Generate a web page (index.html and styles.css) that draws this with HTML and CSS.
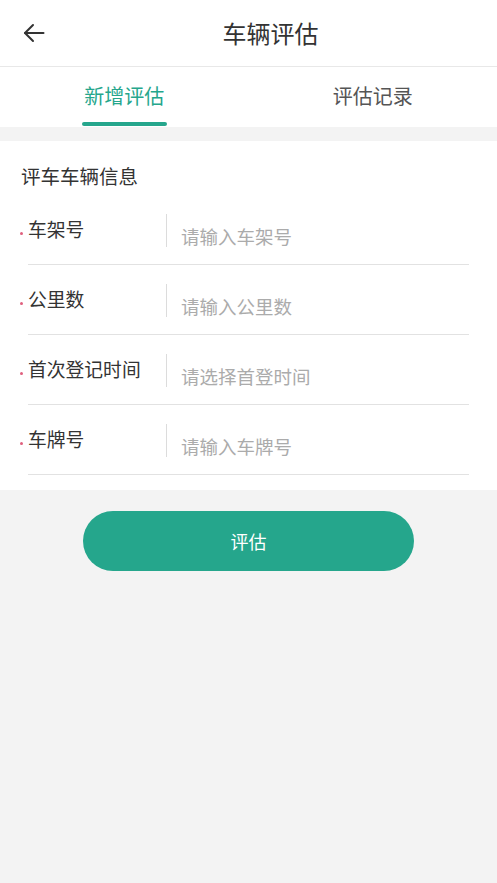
FILE: index.html
```html
<!DOCTYPE html>
<html lang="zh-CN">
<head>
<meta charset="utf-8">
<meta name="viewport" content="width=device-width, initial-scale=1">
<title>车辆评估</title>
<link rel="stylesheet" href="styles.css">
</head>
<body>
<header class="topbar">
  <button class="back" aria-label="返回">
    <svg width="22" height="22" viewBox="0 0 22 22" fill="none" stroke="#333" stroke-width="2" stroke-linecap="round" stroke-linejoin="round"><path d="M20.5 11H2"/><path d="M10 3 L2 11 L10 19"/></svg>
  </button>
  <h1 class="title">车辆评估</h1>
</header>
<nav class="tabs">
  <div class="tab active"><span class="tab-text">新增评估</span><span class="tab-line"></span></div>
  <div class="tab"><span class="tab-text">评估记录</span><span class="tab-line"></span></div>
</nav>
<section class="card">
  <div class="card-title">评车车辆信息</div>
  <div class="row"><div class="label">车架号</div><div class="sep"></div><div class="placeholder">请输入车架号</div></div>
  <div class="row"><div class="label">公里数</div><div class="sep"></div><div class="placeholder">请输入公里数</div></div>
  <div class="row"><div class="label">首次登记时间</div><div class="sep"></div><div class="placeholder">请选择首登时间</div></div>
  <div class="row"><div class="label">车牌号</div><div class="sep"></div><div class="placeholder">请输入车牌号</div></div>
</section>
<div class="actions">
  <button class="submit">评估</button>
</div>
</body>
</html>
```
FILE: styles.css
```css
* { box-sizing: border-box; }
html, body { margin: 0; padding: 0; }
body {
  background: #f3f3f3;
  font-family: "Noto Sans CJK SC", "Noto Sans", sans-serif;
  color: #333;
  min-height: 883px;
}
.topbar {
  height: 67px;
  background: #fff;
  border-bottom: 1px solid #e8e8e8;
  display: flex;
  align-items: center;
  justify-content: center;
  padding-left: 44px;
  position: relative;
}
.back {
  position: absolute;
  left: 23px;
  top: 22px;
  width: 22px;
  height: 22px;
  padding: 0;
  border: 0;
  background: none;
  display: flex;
}
.title {
  margin: 0;
  font-size: 24px;
  font-weight: 400;
  line-height: 30px;
  color: #333;
}
.tabs {
  height: 60px;
  background: #fff;
  display: flex;
}
.tab {
  flex: 1;
  display: flex;
  flex-direction: column;
  align-items: center;
  padding-top: 16px;
}
.tab-text {
  font-size: 20px;
  line-height: 26px;
  color: #555;
}
.tab-line {
  width: 85px;
  height: 4px;
  border-radius: 2px;
  margin-top: 13px;
  background: transparent;
}
.tab.active .tab-text { color: #25a68c; }
.tab.active .tab-line { background: #25a68c; }
.card {
  margin-top: 14px;
  background: #fff;
  padding: 23px 0 15px;
}
.card-title {
  padding-left: 21px;
  font-size: 19.5px;
  line-height: 24px;
  color: #333;
  margin-bottom: 7px;
}
.row {
  position: relative;
  margin: 0 28px;
  height: 70px;
  border-bottom: 1px solid #e2e2e2;
  display: flex;
  align-items: flex-start;
}
.row::before {
  content: "";
  position: absolute;
  left: -8px;
  top: 37px;
  width: 3px;
  height: 3px;
  border-radius: 50%;
  background: #e0607e;
}
.label {
  width: 138px;
  margin-top: 22px;
  font-size: 18.8px;
  line-height: 24px;
  color: #333;
}
.sep {
  width: 1px;
  height: 33px;
  margin-top: 19px;
  background: #dcdcdc;
}
.placeholder {
  margin-left: 14px;
  margin-top: 29px;
  font-size: 18.5px;
  line-height: 24px;
  color: #ababab;
}
.actions {
  display: flex;
  justify-content: center;
  padding-top: 21px;
}
.submit {
  width: 331px;
  height: 60px;
  border: 0;
  border-radius: 30px;
  background: #25a68c;
  color: #fff;
  font-family: "Noto Sans CJK SC", "Noto Sans", sans-serif;
  font-size: 18px;
  line-height: 24px;
  padding: 0;
}
```
